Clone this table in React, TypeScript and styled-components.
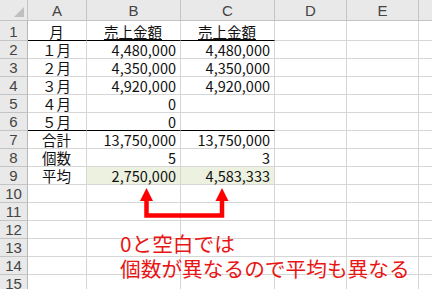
import React from "react";
import styled, { createGlobalStyle } from "styled-components";

const Global = createGlobalStyle`
  html, body { margin: 0; padding: 0; background: #fff; }
  body { font-family: "Noto Sans CJK JP", "Liberation Sans", sans-serif; }
`;

const Sheet = styled.div`
  position: relative;
  width: 432px;
  height: 289px;
  overflow: hidden;
  background: #fff;
`;

const Grid = styled.div`
  display: grid;
  grid-template-columns: 28px 59px 94px 94px 72px 72px 40px;
  grid-template-rows: 21px 20px repeat(14, 18px);
`;

const HeadCell = styled.div<{ $corner?: boolean }>`
  box-sizing: border-box;
  background: #e9e9e9;
  border-right: 1px solid #c4c4c4;
  border-bottom: 1px solid #c4c4c4;
  color: #444;
  font-family: "Liberation Sans", "Noto Sans CJK JP", sans-serif;
  font-size: 15px;
  display: flex;
  align-items: flex-end;
  justify-content: center;
  padding-bottom: 1px;
  line-height: 17px;
  position: relative;
`;

const CornerTri = styled.div`
  position: absolute;
  right: 3px;
  bottom: 3px;
  width: 0;
  height: 0;
  border-left: 10px solid transparent;
  border-bottom: 10px solid #bfbfbf;
`;

const RowHead = styled.div`
  box-sizing: border-box;
  background: #e9e9e9;
  border-right: 1px solid #b8b8b8;
  border-bottom: 1px solid #c4c4c4;
  color: #444;
  font-family: "Liberation Sans", "Noto Sans CJK JP", sans-serif;
  font-size: 15px;
  display: flex;
  align-items: flex-end;
  justify-content: center;
  line-height: 17px;
`;

const Cell = styled.div<{ $align?: "left" | "center" | "right"; $thick?: boolean; $fill?: boolean }>`
  box-sizing: border-box;
  border-right: 1px solid #d6d6d6;
  border-bottom: 1px solid ${(p) => (p.$thick ? "#000" : "#d6d6d6")};
  background: ${(p) => (p.$fill ? "#ecf1e0" : "#fff")};
  color: #111;
  font-size: 14.5px;
  line-height: 17px;
  display: flex;
  align-items: flex-end;
  justify-content: ${(p) =>
    p.$align === "right" ? "flex-end" : p.$align === "center" ? "center" : "flex-start"};
  padding: 0 4px 0 3px;
  white-space: nowrap;
`;

const Under = styled.span`
  text-decoration: underline;
  text-underline-offset: 1px;
`;

const Note = styled.div`
  position: absolute;
  left: 120px;
  top: 231px;
  color: #e81515;
  font-family: "Noto Sans CJK JP", sans-serif;
  font-size: 20.7px;
  line-height: 25px;
  white-space: nowrap;
`;

const Arrows = styled.svg`
  position: absolute;
  left: 0;
  top: 0;
  pointer-events: none;
`;

type Row = { a: string; b: string; c: string; thick?: boolean; fill?: boolean; header?: boolean };

const rows: Row[] = [
  { a: "月", b: "売上金額", c: "売上金額", thick: true, header: true },
  { a: "１月", b: "4,480,000", c: "4,480,000" },
  { a: "２月", b: "4,350,000", c: "4,350,000" },
  { a: "３月", b: "4,920,000", c: "4,920,000" },
  { a: "４月", b: "0", c: "" },
  { a: "５月", b: "0", c: "", thick: true },
  { a: "合計", b: "13,750,000", c: "13,750,000" },
  { a: "個数", b: "5", c: "3" },
  { a: "平均", b: "2,750,000", c: "4,583,333", fill: true },
];

const cols = ["A", "B", "C", "D", "E", ""];

export default function App() {
  const all: Row[] = [...rows];
  for (let i = rows.length; i < 15; i++) all.push({ a: "", b: "", c: "" });
  return (
    <>
      <Global />
      <Sheet>
        <Grid>
          <HeadCell $corner>
            <CornerTri />
          </HeadCell>
          {cols.map((c, i) => (
            <HeadCell key={i}>{c}</HeadCell>
          ))}
          {all.map((r, i) => (
            <React.Fragment key={i}>
              <RowHead>{i + 1}</RowHead>
              <Cell $align="center" $thick={r.thick}>{r.a}</Cell>
              <Cell $align={r.header ? "center" : "right"} $thick={r.thick} $fill={r.fill}>
                {r.header ? <Under>{r.b}</Under> : r.b}
              </Cell>
              <Cell $align={r.header ? "center" : "right"} $thick={r.thick} $fill={r.fill}>
                {r.header ? <Under>{r.c}</Under> : r.c}
              </Cell>
              <Cell />
              <Cell />
              <Cell />
            </React.Fragment>
          ))}
        </Grid>
        <Arrows width="432" height="289" viewBox="0 0 432 289">
          <path
            d="M146.5 199 V215.5 H222 V199"
            fill="none"
            stroke="#ff0000"
            strokeWidth="4.5"
            strokeLinejoin="miter"
          />
          <polygon points="146.5,188 140,201 153,201" fill="#ff0000" />
          <polygon points="222,188 215.5,201 228.5,201" fill="#ff0000" />
        </Arrows>
        <Note>
          0と空白では
          <br />
          個数が異なるので平均も異なる
        </Note>
      </Sheet>
    </>
  );
}
